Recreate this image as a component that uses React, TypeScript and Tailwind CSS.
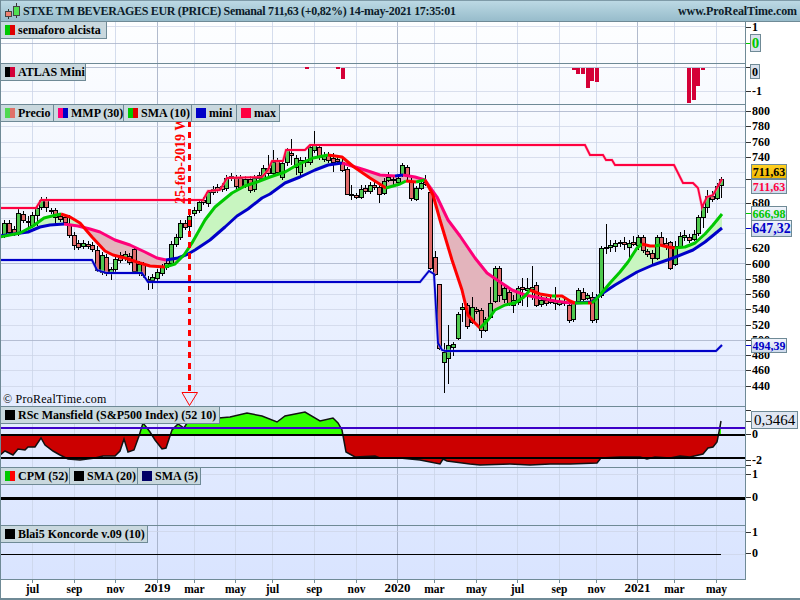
import React from 'react';

type Pt = [number, number];
type Seg = { color: string; pts: Pt[] };

const LINE = '#6f8a96';

const months: [number, string, boolean][] = [
  [32, 'jul', false], [74, 'sep', false], [115, 'nov', false], [157, '2019', true], [194, 'mar', false],
  [235, 'may', false], [272, 'jul', false], [314, 'sep', false], [356, 'nov', false], [397, '2020', true],
  [434, 'mar', false], [476, 'may', false], [517, 'jul', false], [559, 'sep', false], [596, 'nov', false],
  [637, '2021', true], [674, 'mar', false], [716, 'may', false],
];

// top, bottom, 0 green / 1 red, optional high and low (page pixels)
const candles: number[][] = [
  [223,235,0],[223,232,1],[229,233,1],[213,233,0,207,236],[214,220,1],[221,222,0,216,227],[215,225,0],[208,215,0,205,226],
  [200,207,0],[200,207,1,197,212],[210,211,0,208,214],[210,217,1,208,225],[216,219,1],[217,222,1],[225,235,1,215,238],[235,245,1,232,250],
  [243,247,1],[243,246,0],[244,246,1],[245,249,1],[250,270,1,246,272],[255,272,0],[257,273,1],[269,273,0,267,280],
  [259,269,0],[255,260,1],[254,258,0],[256,262,1],[249,271,1],[264,273,0],[264,275,1,262,278],[279,280,0,276,290],
  [277,280,0,274,289],[272,278,0],[267,273,0],[263,267,0],[244,263,0],[237,244,0],[223,237,0],[223,227,1],
  [216,226,0,214,232],[210,213,0],[202,210,0],[200,202,1],[192,203,0,190,207],[189,192,0],[187,190,1],[186,189,1],
  [178,188,0],[176,178,0],[178,186,1],[178,187,1],[179,185,0],[179,190,1],[178,189,0],[175,178,0],
  [168,178,0,165,180],[168,173,1,155,176],[162,173,0,150,176],[161,172,1,158,175],[163,177,0,160,180],[150,162,0,148,166],[153,155,1,139,165],[158,167,0,155,175],
  [160,172,0,157,178],[160,162,0,157,167],[147,162,0,145,165],[145,150,0,131,153],[147,157,1,145,160],[155,159,0],[155,160,1],[158,162,1,153,172],
  [159,161,1],[162,170,1,158,172],[169,194,1,167,195],[194,195,0,185,200],[195,197,1,193,199],[189,197,0,185,199],[188,191,1],[185,191,0,182,194],
  [185,187,1],[187,194,1,184,203],[181,193,0,178,195],[177,180,0,172,182],[179,180,0,175,185],[178,182,0,176,186],[165,175,0,163,177],[167,175,1,165,180],
  [182,198,1,178,201],[188,199,0,186,201],[183,188,0,180,190],[182,184,1,175,186],[192,268,1,190,270],[257,274,1,251,276],[284,348,1,284,350],[352,362,0,343,393],
  [345,358,0,325,384],[344,347,0,342,356],[314,338,0,312,340],[307,309,0,303,322],[305,326,1,303,329],[307,322,0,297,324],[309,311,1,307,314],[310,330,1,308,338],
  [319,330,0,317,332],[303,317,0,287,319],[268,301,0,266,303],[268,295,1,266,302],[288,299,0,284,303],[292,303,1,290,306],[300,305,0,295,313],[288,302,0,286,305],
  [287,289,1,278,306],[288,290,0,278,307],[287,289,0,266,300],[285,305,1,282,307],[300,304,0,296,307],[300,303,1,297,306],[299,302,1,295,304],[301,303,0,287,310],
  [302,304,0,298,306],[301,303,1,298,306],[305,320,1,303,323],[303,319,0,301,322],[290,301,0,288,303],[292,299,1,288,302],[295,298,0,293,300],[297,320,1,292,323],
  [297,319,0,294,323],[248,295,0,246,298],[247,248,0,224,254],[245,247,0,240,252],[243,246,0,240,252],[242,243,0,240,247],[242,244,1,237,250],[243,247,0,240,259],
  [242,244,1,236,246],[237,245,0,235,250],[237,250,1,235,253],[251,254,1,249,257],[253,258,1,250,266],[237,258,0,235,260],[237,244,1,232,246],[243,246,1,238,250],
  [242,268,1,241,270],[246,264,0,241,266],[236,246,0,232,248],[235,237,0,230,241],[237,240,1,234,243],[234,239,0,230,241],[217,233,0,215,236],[207,217,0,205,228],
  [196,207,0,190,213],[196,199,1,191,202],[186,198,0,183,200],[179,185,0,177,198],
];

const maxLine: Pt[] = [[0,208],[36,208],[41,200],[203,200],[208,191],[220,190],[227,178],[262,177],[268,170],[272,161],[283,161],[286,150],[305,150],[310,145],[585,145],[590,155],[603,155],[606,160],[612,160],[615,165],[674,165],[683,183],[693,183],[698,188],[702,207],[707,197],[713,195],[722,179]];
const miniLine: Pt[] = [[0,260],[92,260],[97,270],[107,273],[142,273],[148,282],[420,282],[429,271],[434,274],[438,343],[442,350],[446,351],[716,351],[722,345]];

const G = '#00c800';
const R = '#ff0000';
const sma: Seg[] = [
  { color: G, pts: [[0,237],[20,233],[33,226],[44,218],[52,216],[61,214]] },
  { color: R, pts: [[61,214],[70,217],[80,223],[92,237],[105,251],[113,255],[125,258],[140,263],[150,266],[165,267]] },
  { color: G, pts: [[165,267],[175,264],[184,255],[192,243],[205,220],[215,207],[232,193],[245,186],[257,182],[270,177],[285,172],[297,165],[313,158],[328,155]] },
  { color: R, pts: [[328,155],[342,157],[354,167],[370,178],[386,188]] },
  { color: G, pts: [[386,188],[400,184],[406,181]] },
  { color: R, pts: [[406,181],[416,182]] },
  { color: G, pts: [[416,182],[425,180]] },
  { color: R, pts: [[425,180],[433,195],[440,220],[452,260],[462,290],[468,315],[473,321],[480,328]] },
  { color: G, pts: [[480,328],[488,320],[495,310],[505,305],[515,303],[524,297],[530,290]] },
  { color: R, pts: [[530,290],[540,294],[552,296]] },
  { color: G, pts: [[552,296],[556,296]] },
  { color: R, pts: [[556,296],[562,296],[570,301],[575,303]] },
  { color: G, pts: [[575,303],[588,303]] },
  { color: R, pts: [[588,303],[592,303]] },
  { color: G, pts: [[592,303],[600,295],[610,283],[620,272],[628,262],[637,248],[642,244]] },
  { color: R, pts: [[642,244],[650,246],[655,246]] },
  { color: G, pts: [[655,246],[660,245]] },
  { color: R, pts: [[660,245],[668,247],[675,248]] },
  { color: G, pts: [[675,248],[685,247],[695,243],[705,234],[713,225],[722,214]] },
];

const B = '#0000c8';
const P = '#ff0078';
const mmp: Seg[] = [
  { color: B, pts: [[0,236],[28,232],[40,227],[50,225],[64,224]] },
  { color: P, pts: [[64,224],[78,226],[90,229],[100,232],[115,240],[130,245],[145,252],[157,258],[166,260]] },
  { color: B, pts: [[166,260],[178,258],[188,254],[195,250],[210,240],[225,227],[237,216],[248,209],[262,198],[270,194],[285,183],[300,177],[315,170],[328,165],[342,163]] },
  { color: P, pts: [[342,163],[352,166],[365,170],[380,175],[395,176]] },
  { color: B, pts: [[395,176],[403,175]] },
  { color: P, pts: [[403,175],[415,177],[425,180],[437,197],[448,220],[460,236],[475,258],[487,273],[500,282],[512,290],[525,295],[540,298],[555,301],[570,303],[575,303]] },
  { color: B, pts: [[575,303],[592,302],[600,295],[615,285],[637,272],[653,265],[673,258],[693,250],[705,242],[722,228]] },
];

const rsc: Pt[] = [[0,455],[5,451],[13,455],[18,449],[25,450],[28,447],[35,447],[41,438],[45,445],[53,451],[60,455],[68,459],[80,460],[95,458],[103,456],[115,456],[120,451],[124,439],[128,452],[134,450],[139,436],[143,423],[147,428],[150,432],[155,440],[162,449],[166,448],[172,430],[178,424],[184,428],[190,418],[207,419],[230,417],[247,413],[262,416],[277,422],[285,416],[305,412],[320,421],[333,418],[338,423],[342,430],[346,452],[355,457],[375,456],[380,458],[400,458],[420,460],[440,464],[443,459],[447,461],[470,464],[480,465],[510,464],[530,465],[550,464],[570,464],[597,463],[601,458],[620,457],[640,457],[647,459],[655,457],[670,458],[680,456],[690,457],[703,454],[708,448],[713,447],[717,442],[719,432],[721,421]];

const bars: number[][] = [
  [305,67,69],[336,67,69],[341,68,79],
  [572,68,70],[576,68,74],[581,68,74],[586,68,88],[590,68,81],[595,68,82],
  [687,68,103],[692,68,100],[696,68,86],[701,68,70],
];

const str = (pts: Pt[]) => pts.map((p) => p.join(',')).join(' ');

const yAt = (pts: Pt[], x: number) => {
  for (let i = 1; i < pts.length; i++) {
    if (x <= pts[i][0]) {
      const [x0, y0] = pts[i - 1];
      const [x1, y1] = pts[i];
      return x1 === x0 ? y1 : y0 + ((y1 - y0) * (x - x0)) / (x1 - x0);
    }
  }
  return pts[pts.length - 1][1];
};

// shaded area between the two averages, green when the fast one is above
const cloud = () => {
  const a = sma.flatMap((s) => s.pts);
  const b = mmp.flatMap((s) => s.pts);
  const out: { up: boolean; top: Pt[]; bot: Pt[] }[] = [];
  for (let x = 0; x <= 722; x++) {
    const ya = yAt(a, x);
    const yb = yAt(b, x);
    const up = ya <= yb;
    let cur = out[out.length - 1];
    if (!cur || cur.up !== up) {
      cur = { up, top: [], bot: [] };
      if (out.length) {
        const prev = out[out.length - 1];
        cur.top.push(prev.top[prev.top.length - 1]);
        cur.bot.push(prev.bot[prev.bot.length - 1]);
      }
      out.push(cur);
    }
    cur.top.push([x, ya]);
    cur.bot.push([x, yb]);
  }
  return out;
};

const Grid = ({ top, bottom, lines = [], dark = [] }: { top: number; bottom: number; lines?: number[]; dark?: number[] }) => (
  <g shapeRendering="crispEdges">
    {months.map(([x, , year]) => (
      <line key={x} x1={x + 0.5} x2={x + 0.5} y1={top} y2={bottom} stroke={year ? '#98a4bc' : '#cbd4e8'} strokeOpacity={year ? 0.75 : 0.8} />
    ))}
    {lines.map((y) => (
      <line key={y} x1={0} x2={746} y1={y + 0.5} y2={y + 0.5} stroke="#ccd3e6" strokeOpacity={0.7} />
    ))}
    {dark.map((y) => (
      <line key={y} x1={0} x2={746} y1={y + 0.5} y2={y + 0.5} stroke="#a8b2c8" strokeOpacity={0.8} />
    ))}
  </g>
);

const Chip = ({ a, b, label, width }: { a: string; b?: string; label: string; width: string }) => (
  <div className={'flex h-[17px] items-center gap-[3px] border-r border-b border-[#6f8a96] bg-[#c9d8de] pl-[4px] text-[12px] leading-none font-bold whitespace-nowrap text-black ' + width}>
    <span className="flex h-[10px] w-[10px] shrink-0">
      <span className="h-full flex-1" style={{ background: a }} />
      <span className="h-full flex-1" style={{ background: b ?? a }} />
    </span>
    {label}
  </div>
);

const Ticks = ({ items }: { items: [number, string][] }) => (
  <>
    {items.map(([y, t]) => (
      <g key={y + t}>
        <line x1={746} x2={751} y1={y + 0.5} y2={y + 0.5} stroke="#333" shapeRendering="crispEdges" />
        <text x={752} y={y + 4} fontSize={12} fontWeight={700} fill="#000">{t}</text>
      </g>
    ))}
  </>
);

const Axis = ({ top, h, children }: { top: number; h: number; children: React.ReactNode }) => (
  <svg className="block h-full w-full overflow-visible" viewBox={'746 ' + top + ' 54 ' + h}>{children}</svg>
);

const Plot = ({ top, h, children }: { top: number; h: number; children: React.ReactNode }) => (
  <svg className="block h-full w-full" viewBox={'1 ' + top + ' 744 ' + h}>{children}</svg>
);

const priceLabels: [number, string][] = [800,780,760,740,680,620,600,580,560,540,520,500,480,460,440].map((p) => [Math.round(111 + (800 - p) * 0.7625), String(p)]);
const priceLines = Array.from({ length: 19 }, (_, i) => Math.round(111 + i * 15.25)).filter((y) => (y - 111) % 76 > 1);

const ValueBox = ({ className, children }: { className: string; children: React.ReactNode }) => (
  <div className={'absolute flex items-center justify-center border border-[#6f8a96] leading-none ' + className}>{children}</div>
);

export default function App() {
  return (
    <div className="flex h-[600px] w-[800px] flex-col overflow-hidden border-l border-[#6f8a96] bg-white font-['Liberation_Serif',serif] text-black">
      <header className="flex h-[22px] shrink-0 items-center justify-between border-t border-b border-t-[#7f9ba8] border-b-[#6f8a96] bg-linear-to-b from-[#bcd9e4] to-[#97bccb] pr-[3px] pl-[2px]">
        <div className="flex items-center gap-[2px]">
          <svg width="18" height="18" viewBox="0 0 18 18" shapeRendering="crispEdges">
            <line x1="5.5" x2="5.5" y1="7" y2="17" stroke="#333" />
            <rect x="2.5" y="9.5" width="6" height="5" fill="#f08070" stroke="#444" />
            <line x1="13.5" x2="13.5" y1="1" y2="16" stroke="#333" />
            <rect x="10.5" y="4.5" width="6" height="9" fill="#50e050" stroke="#444" />
          </svg>
          <span className="text-[12px] font-bold tracking-[-0.32px] whitespace-nowrap text-[#0c1c2a]">STXE TM BEVERAGES EUR (PRICE) Semanal 711,63 (+0,82%) 14-may-2021 17:35:01</span>
        </div>
        <span className="text-[12px] font-bold tracking-[-0.1px] text-[#0c1c2a]">www.ProRealTime.com</span>
      </header>

      <div className="flex h-[558px] shrink-0">
        <div className="flex w-[745px] shrink-0 flex-col border-r border-[#6f8a96] bg-linear-to-b from-[#fdfeff] to-[#d9e4ff]">
          <section className="relative h-[42px] border-b border-[#6f8a96]">
            <Plot top={22} h={41}>
              <Grid top={22} bottom={63} lines={[26]} dark={[43]} />
            </Plot>
            <div className="absolute top-0 left-0 flex">
              <Chip a="#00c800" b="#e00000" label="semaforo alcista" width="w-[106px]" />
            </div>
          </section>

          <section className="relative h-[41px] border-b border-[#6f8a96]">
            <Plot top={64} h={40}>
              <Grid top={64} bottom={104} lines={[91]} dark={[67]} />
              <g shapeRendering="crispEdges">
                {bars.map(([x, a, b]) => (
                  <rect key={x} x={x} y={a} width={3.5} height={b - a} fill="#d40037" />
                ))}
              </g>
            </Plot>
            <div className="absolute top-0 left-0 flex">
              <Chip a="#000000" b="#d40037" label="ATLAS Mini" width="w-[85px]" />
            </div>
          </section>

          <section className="relative h-[302px] border-b border-[#6f8a96]">
            <Plot top={105} h={301}>
              <Grid top={105} bottom={406} lines={priceLines} dark={[111, 187, 263, 340]} />
              {cloud().map((c, i) => (
                <polygon key={i} points={str([...c.top, ...[...c.bot].reverse()])} fill={c.up ? '#c8f5c0' : '#e3b4bc'} />
              ))}
              <g shapeRendering="crispEdges">
                {candles.map(([t, b, red, hi, lo], i) => {
                  const x = Math.round(4.4 + i * 4.625);
                  return (
                    <g key={i}>
                      <line x1={x + 0.5} x2={x + 0.5} y1={hi ?? t - 3} y2={lo ?? b + 3} stroke="#000" />
                      <rect x={x - 1.5} y={t + 0.5} width={4} height={Math.max(b - t, 1)} fill={red ? '#e06a6a' : '#4fc84f'} stroke="#000" />
                    </g>
                  );
                })}
              </g>
              <polyline points={str(miniLine)} fill="none" stroke="#9aa0ee" strokeWidth={3} strokeOpacity={0.6} />
              <polyline points={str(miniLine)} fill="none" stroke="#0000c8" strokeWidth={1.8} />
              <polyline points={str(maxLine)} fill="none" stroke="#ff9ab0" strokeWidth={3} strokeOpacity={0.6} />
              <polyline points={str(maxLine)} fill="none" stroke="#ff0040" strokeWidth={1.8} />
              {mmp.map((s, i) => (
                <polyline key={i} points={str(s.pts)} fill="none" stroke={s.color} strokeWidth={3} strokeLinejoin="round" />
              ))}
              {sma.map((s, i) => (
                <polyline key={i} points={str(s.pts)} fill="none" stroke={s.color} strokeWidth={3} strokeLinejoin="round" />
              ))}
              <line x1={189.5} x2={189.5} y1={121} y2={392} stroke="#ff0000" strokeWidth={3} strokeDasharray="6 5" />
              <polygon points="182,392.5 197.5,392.5 189.5,405.5" fill="none" stroke="#ff0000" />
              <text transform="translate(185 204) rotate(-90)" fontSize={14} fontWeight={700} fill="#ff0000">25-feb-2019 W</text>
            </Plot>
            <div className="absolute top-0 left-0 flex">
              <Chip a="#50d850" b="#e07068" label="Precio" width="w-[53px]" />
              <Chip a="#ff0078" b="#0000c8" label="MMP (30)" width="w-[70px]" />
              <Chip a="#00c800" b="#e00000" label="SMA (10)" width="w-[68px]" />
              <Chip a="#0000c8" label="mini" width="w-[45px]" />
              <Chip a="#ff0040" label="max" width="w-[43px]" />
            </div>
            <span className="absolute bottom-[1px] left-[2px] text-[12px] leading-none tracking-[0.25px]">© ProRealTime.com</span>
          </section>

          <section className="relative h-[61px] border-b border-[#6f8a96]">
            <Plot top={407} h={60}>
              <defs>
                <clipPath id="above"><rect x={0} y={400} width={746} height={35} /></clipPath>
                <clipPath id="below"><rect x={0} y={435} width={746} height={40} /></clipPath>
              </defs>
              <Grid top={407} bottom={467} />
              <polygon points={str([[0, 435], ...rsc, [721, 435]])} fill="#33ff00" clipPath="url(#above)" />
              <polygon points={str([[0, 435], ...rsc, [721, 435]])} fill="#cc0000" clipPath="url(#below)" />
              <polyline points={str(rsc)} fill="none" stroke="#111" strokeWidth={1.5} />
              <line x1={0} x2={746} y1={428} y2={428} stroke="#3c00c8" strokeWidth={2} />
              <line x1={0} x2={746} y1={435} y2={435} stroke="#000" strokeWidth={2} />
              <line x1={0} x2={746} y1={458} y2={458} stroke="#000" strokeWidth={2} />
            </Plot>
            <div className="absolute top-0 left-0 flex">
              <Chip a="#000000" label="RSc Mansfield (S&P500 Index) (52 10)" width="w-[219px]" />
            </div>
          </section>

          <section className="relative h-[58px] border-b border-[#6f8a96]">
            <Plot top={468} h={57}>
              <Grid top={468} bottom={525} lines={[474]} />
              <line x1={0} x2={746} y1={498.5} y2={498.5} stroke="#000" strokeWidth={3} />
            </Plot>
            <div className="absolute top-0 left-0 flex">
              <Chip a="#00c800" b="#ff0000" label="CPM (52)" width="w-[69px]" />
              <Chip a="#000000" label="SMA (20)" width="w-[68px]" />
              <Chip a="#000066" label="SMA (5)" width="w-[63px]" />
            </div>
          </section>

          <section className="relative h-[54px] border-b border-[#6f8a96]">
            <Plot top={526} h={53}>
              <Grid top={526} bottom={579} lines={[531, 554]} />
              <line x1={0} x2={721} y1={554.5} y2={554.5} stroke="#000" shapeRendering="crispEdges" />
            </Plot>
            <div className="absolute top-0 left-0 flex">
              <Chip a="#000000" label="Blai5 Koncorde v.09 (10)" width="w-[147px]" />
            </div>
          </section>
        </div>

        <div className="relative flex w-[54px] shrink-0 flex-col">
          <div className="h-[42px]">
            <Axis top={22} h={42}><Ticks items={[[27, '1']]} /><line x1={746} x2={751} y1={43.5} y2={43.5} stroke="#00c800" /></Axis>
          </div>
          <div className="h-[41px]">
            <Axis top={64} h={41}><Ticks items={[[91, '-1']]} /><line x1={746} x2={750} y1={67.5} y2={67.5} stroke="#333" /></Axis>
          </div>
          <div className="h-[302px]">
            <Axis top={105} h={302}>
              <Ticks items={priceLabels} />
              <line x1={746} x2={751} y1={179.5} y2={179.5} stroke="#333" />
              <line x1={746} x2={751} y1={213.5} y2={213.5} stroke="#00c800" />
              <line x1={746} x2={751} y1={228.5} y2={228.5} stroke="#0000c8" />
              <line x1={746} x2={751} y1={345.5} y2={345.5} stroke="#0000c8" />
            </Axis>
          </div>
          <div className="h-[61px]">
            <Axis top={407} h={61}>
              <Ticks items={[[434, '0'], [460, '-2']]} />
              <line x1={746} x2={751} y1={410.5} y2={410.5} stroke="#333" />
              <line x1={746} x2={751} y1={421.5} y2={421.5} stroke="#333" />
              <line x1={746} x2={751} y1={465.5} y2={465.5} stroke="#333" />
            </Axis>
          </div>
          <div className="h-[58px]">
            <Axis top={468} h={58}><Ticks items={[[474, '1'], [497, '0']]} /></Axis>
          </div>
          <div className="h-[54px]">
            <Axis top={526} h={54}><Ticks items={[[532, '1'], [553, '0']]} /></Axis>
          </div>

          <ValueBox className="top-[12px] left-[4px] h-[18px] w-[11px] bg-[#d8e0ec] text-[15px] font-bold text-[#00c800]">0</ValueBox>
          <ValueBox className="top-[42px] left-[4px] h-[15px] w-[10px] bg-[#d8e0ec] text-[12px] font-bold">0</ValueBox>
          <ValueBox className="top-[142px] left-[5px] h-[15px] w-[36px] bg-linear-to-b from-[#ffd020] to-[#f0b800] text-[12px] font-bold">711,63</ValueBox>
          <ValueBox className="top-[157px] left-[5px] h-[15px] w-[36px] bg-linear-to-b from-[#f0f4fb] to-[#cdd9ec] text-[12px] font-bold text-[#ff0040]">711,63</ValueBox>
          <ValueBox className="top-[184px] left-[5px] h-[15px] w-[36px] bg-linear-to-b from-[#f0f4fb] to-[#cdd9ec] text-[12px] font-bold text-[#00c800]">666,98</ValueBox>
          <ValueBox className="top-[198px] left-[5px] h-[17px] w-[41px] bg-linear-to-b from-[#f0f4fb] to-[#cdd9ec] text-[14px] font-bold text-[#0000c8]">647,32</ValueBox>
          <ValueBox className="top-[316px] left-[5px] h-[15px] w-[36px] bg-linear-to-b from-[#f0f4fb] to-[#cdd9ec] text-[12px] font-bold text-[#0000c8]">494,39</ValueBox>
          <ValueBox className="top-[389px] left-[5px] h-[18px] w-[47px] bg-[#dfe6f2] text-[15px]">0,3464</ValueBox>
        </div>
      </div>

      <div className="h-[20px] shrink-0 border-b-2 border-[#6f8a96]">
        <svg className="block h-full w-full" viewBox="1 580 799 18">
          {months.map(([x, t, year]) => (
            <g key={x}>
              <line x1={x + 0.5} x2={x + 0.5} y1={580} y2={583} stroke={LINE} shapeRendering="crispEdges" />
              <text x={x + 0.5} y={year ? 592 : 593} textAnchor="middle" fontSize={year ? 13 : 11.5} fontWeight={700} fill="#000">{t}</text>
            </g>
          ))}
        </svg>
      </div>
    </div>
  );
}
